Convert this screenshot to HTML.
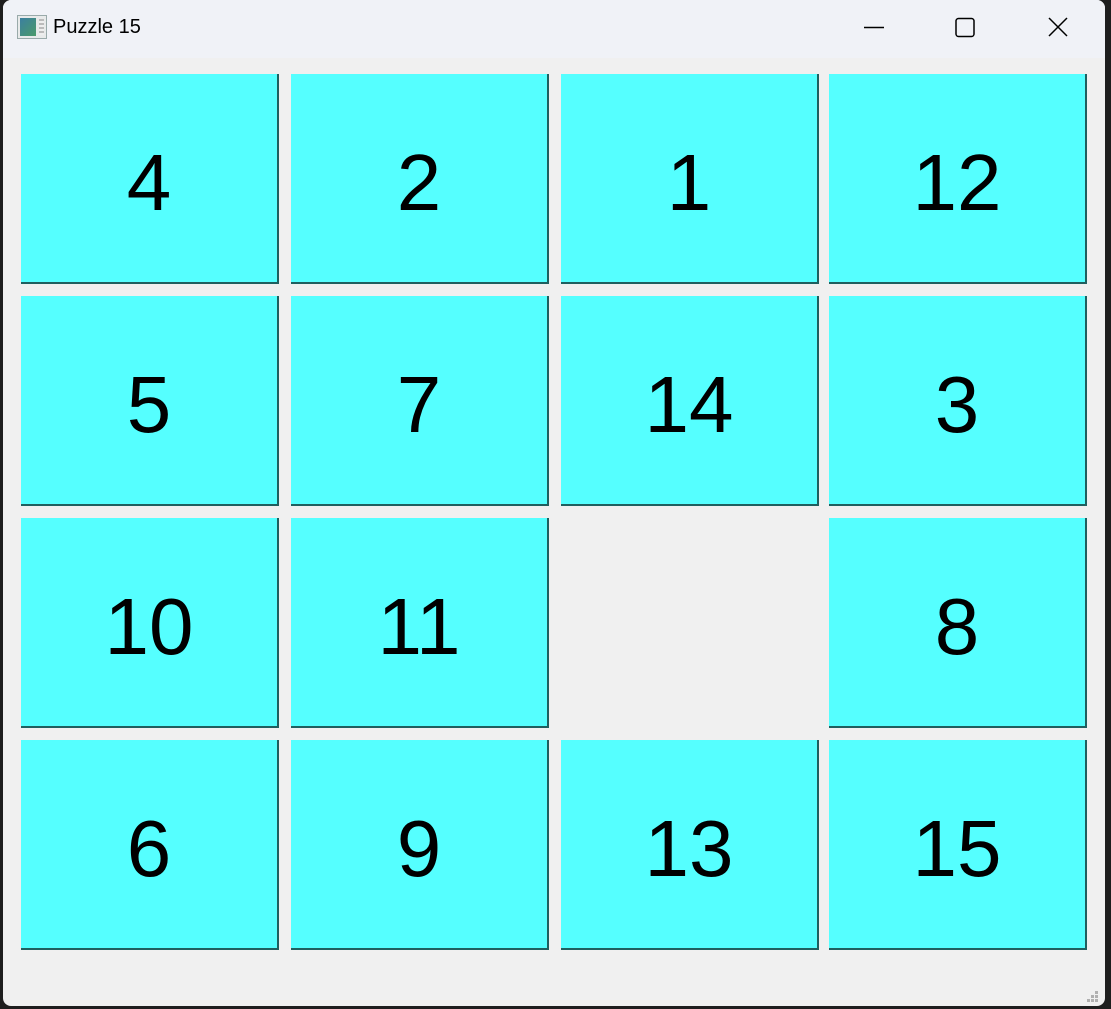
<!DOCTYPE html>
<html><head><meta charset="utf-8"><style>
*{margin:0;padding:0;box-sizing:border-box}
html,body{width:1111px;height:1009px;overflow:hidden;background:#1e1e1e;font-family:"Liberation Sans",sans-serif}
.win{position:absolute;left:3px;top:0;width:1102px;height:1006px;background:#f0f0f0;border-radius:8px 8px 8px 8px;overflow:hidden}
.title{position:absolute;left:0;top:0;width:100%;height:58px;background:#f0f2f7}
.title .t{position:absolute;left:50px;top:16px;font-size:20px;color:#000}
.icon{position:absolute;left:14px;top:15px;width:30px;height:24px;border:1px solid #9aa;background:#e8eaea}
.icon:before{content:"";position:absolute;left:2px;top:2px;width:16px;height:18px;background:linear-gradient(135deg,#3b7fa0,#4a9a6a)}
.icon:after{content:"";position:absolute;left:21px;top:3px;width:5px;height:16px;background:repeating-linear-gradient(#bbb 0 2px,#eee 2px 4px)}
.tile{position:absolute;width:258px;height:210px;background:#55ffff;border-right:2px solid #1f5f5f;border-bottom:2px solid #1f5f5f;text-align:center;line-height:200px;font-size:80px;color:#000;padding-top:9px}
.grip{position:absolute;width:3px;height:3px;background:#b0b0b0}
</style></head><body>
<div class="win">
<div class="title"><div class="icon"></div><div class="t">Puzzle 15</div>
<svg style="position:absolute;left:850px;top:16px" width="230" height="24">
<line x1="11" y1="11.5" x2="31" y2="11.5" stroke="#000" stroke-width="1.5"/>
<rect x="103" y="2.5" width="18" height="18" rx="2.5" fill="none" stroke="#000" stroke-width="1.5"/>
<path d="M196 2 L214 20 M214 2 L196 20" stroke="#000" stroke-width="1.5"/>
</svg></div>
<div class="tile" style="left:18px;top:74px">4</div>
<div class="tile" style="left:288px;top:74px">2</div>
<div class="tile" style="left:558px;top:74px">1</div>
<div class="tile" style="left:826px;top:74px">12</div>
<div class="tile" style="left:18px;top:296px">5</div>
<div class="tile" style="left:288px;top:296px">7</div>
<div class="tile" style="left:558px;top:296px">14</div>
<div class="tile" style="left:826px;top:296px">3</div>
<div class="tile" style="left:18px;top:518px">10</div>
<div class="tile" style="left:288px;top:518px">11</div>
<div class="tile" style="left:826px;top:518px">8</div>
<div class="tile" style="left:18px;top:740px">6</div>
<div class="tile" style="left:288px;top:740px">9</div>
<div class="tile" style="left:558px;top:740px">13</div>
<div class="tile" style="left:826px;top:740px">15</div>
<div class="grip" style="left:1092px;top:991px"></div>
<div class="grip" style="left:1088px;top:995px"></div><div class="grip" style="left:1092px;top:995px"></div>
<div class="grip" style="left:1084px;top:999px"></div><div class="grip" style="left:1088px;top:999px"></div><div class="grip" style="left:1092px;top:999px"></div>
</div>
</body></html>
